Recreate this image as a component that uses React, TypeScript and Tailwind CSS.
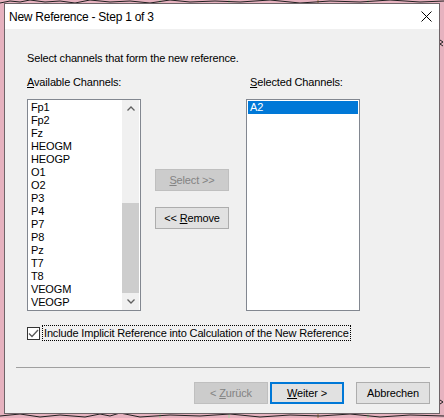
import React from 'react';

const available = ['Fp1', 'Fp2', 'Fz', 'HEOGM', 'HEOGP', 'O1', 'O2', 'P3', 'P4', 'P7', 'P8', 'Pz', 'T7', 'T8', 'VEOGM', 'VEOGP'];

const sans = { fontFamily: '"Liberation Sans", Arial, sans-serif' };

const Chevron = ({ down }: { down?: boolean }) => (
  <svg width="8" height="5" viewBox="0 0 8 5">
    <polyline
      points={down ? '0.5,0.5 4,4 7.5,0.5' : '0.5,4.5 4,1 7.5,4.5'}
      fill="none"
      stroke="#606060"
      strokeWidth="1.3"
    />
  </svg>
);

const WinButton = ({
  children,
  disabled,
  focused,
}: {
  children: React.ReactNode;
  disabled?: boolean;
  focused?: boolean;
}) => (
  <div
    className={`w-[74px] h-[22px] flex items-center justify-center text-[11px] leading-[13px] border ${
      disabled
        ? 'bg-[#cccccc] border-[#bfbfbf] text-[#838383]'
        : focused
        ? 'bg-[#e1e1e1] border-2 border-[#0078d7] text-black'
        : 'bg-[#e1e1e1] border-[#adadad] text-black'
    }`}
  >
    {children}
  </div>
);

export default function App() {
  return (
    <div className="relative w-[444px] h-[418px] overflow-hidden bg-[#e6b2bf] pt-[3px] pl-[4px]" style={sans}>
      {/* background trace lines behind the dialog */}
      <svg className="absolute left-0 top-0" width="444" height="418">
        <line x1="229" y1="0" x2="229" y2="418" stroke="#a8d8a0" strokeWidth="1" />
        <line x1="318" y1="0" x2="318" y2="418" stroke="#9a7a40" strokeWidth="1" />
        <line x1="368" y1="0" x2="368" y2="418" stroke="#a8d8a0" strokeWidth="1" />
        <line x1="160" y1="0" x2="160" y2="418" stroke="#a8d8a0" strokeWidth="1" />
        <polyline points="0,3 10,1 20,2 30,0 45,2 60,1 75,3 90,0 110,2 130,1 150,3 170,0 190,2 215,1 240,2 270,0 300,3 330,1 360,2 390,0 420,2 444,1" fill="none" stroke="#202020" strokeWidth="1" />
        <polyline points="0,416 20,414 40,417 60,415 85,417 100,414 110,416 120,413 140,417 170,415 200,416 230,414 260,417 290,415 320,416 350,414 380,417 410,415 444,416" fill="none" stroke="#202020" strokeWidth="1" />
        <polyline points="440,40 443,42 440,44 443,46" fill="none" stroke="#202020" strokeWidth="1" />
        <polyline points="440,400 443,402 440,404" fill="none" stroke="#202020" strokeWidth="1" />
      </svg>

      <div className="relative w-[436px] h-[411px] border border-[#6e6468] bg-[#f0f0f0] flex flex-col">
        {/* title bar */}
        <div className="h-[25px] bg-white flex items-center justify-between pl-[4px] pr-[7px]">
          <span className="text-[12px] text-black tracking-[-0.25px]">
            New Reference - Step 1 of 3
          </span>
          <svg width="11" height="11" viewBox="0 0 11 11">
            <line x1="0.5" y1="0.5" x2="10.5" y2="10.5" stroke="#000" strokeWidth="1" />
            <line x1="10.5" y1="0.5" x2="0.5" y2="10.5" stroke="#000" strokeWidth="1" />
          </svg>
        </div>

        {/* client area */}
        <div className="flex-1 flex flex-col text-[11px] leading-[13px] text-black tracking-[-0.15px]">
          <div className="pl-[22px] pt-[23px]">
            <p>Select channels that form the new reference.</p>

            <div className="flex mt-[11px]">
              {/* available */}
              <div className="flex flex-col">
                <span className="mb-[10px]">
                  <span className="underline">A</span>vailable Channels:
                </span>
                <div className="w-[114px] h-[212px] border border-[#828790] bg-white flex pr-[1px]">
                  <div className="flex-1 pt-[1px] pl-[3px]">
                    {available.map((c) => (
                      <div key={c} className="h-[13px] leading-[13px]">
                        {c}
                      </div>
                    ))}
                  </div>
                  <div className="w-[17px] bg-[#f0f0f0] flex flex-col">
                    <div className="h-[17px] flex items-center justify-center">
                      <Chevron />
                    </div>
                    <div className="flex-1" />
                    <div className="h-[90px] bg-[#cdcdcd]" />
                    <div className="h-[17px] flex items-center justify-center">
                      <Chevron down />
                    </div>
                  </div>
                </div>
              </div>

              {/* middle buttons */}
              <div className="ml-[14px] pt-[93px] flex flex-col gap-[16px]">
                <WinButton disabled>
                  <span>
                    <span className="underline">S</span>elect &gt;&gt;
                  </span>
                </WinButton>
                <WinButton>
                  <span>
                    &lt;&lt; <span className="underline">R</span>emove
                  </span>
                </WinButton>
              </div>

              {/* selected */}
              <div className="ml-[17px] flex flex-col">
                <span className="mb-[10px] pl-[4px]">
                  <span className="underline">S</span>elected Channels:
                </span>
                <div className="w-[114px] h-[212px] border border-[#828790] bg-white pt-[1px] px-[1px]">
                  <div className="h-[13px] leading-[13px] bg-[#0078d7] text-white pl-[2px]">A2</div>
                </div>
              </div>
            </div>

            {/* checkbox */}
            <div className="flex items-center mt-[14px] h-[16px]">
              <div className="w-[13px] h-[13px] border border-[#333333] bg-white flex items-center justify-center">
                <svg width="11" height="9" viewBox="0 0 11 9">
                  <polyline points="1,4.5 4,7.5 10,1" fill="none" stroke="#5a5a5a" strokeWidth="1.3" />
                </svg>
              </div>
              <span className="ml-[2px] px-[1px] h-[16px] flex items-center border border-dotted border-black">
                Include Implicit Reference into Calculation of the New Reference
              </span>
            </div>
          </div>

          {/* separator */}
          <div className="mt-[26px] ml-[11px] mr-[9px] h-px bg-[#a0a0a0]" />

          {/* bottom buttons */}
          <div className="mt-[14px] flex justify-end pr-[9px]">
            <WinButton disabled>
              <span>
                &lt; <span className="underline">Z</span>urück
              </span>
            </WinButton>
            <div className="ml-[2px]">
              <WinButton focused>
                <span>
                  <span className="underline">W</span>eiter &gt;
                </span>
              </WinButton>
            </div>
            <div className="ml-[12px]">
              <WinButton>Abbrechen</WinButton>
            </div>
          </div>
        </div>
      </div>
    </div>
  );
}
